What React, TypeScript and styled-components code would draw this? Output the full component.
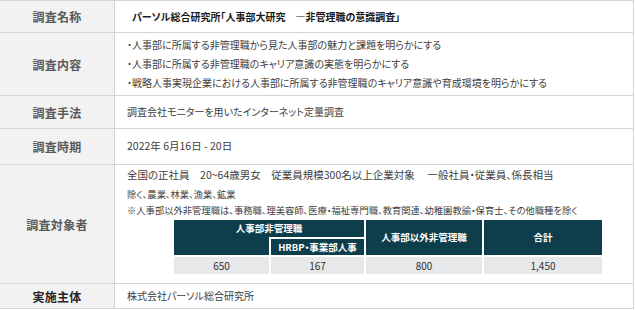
import React from "react";
import styled, { createGlobalStyle } from "styled-components";

const Global = createGlobalStyle`
  html, body { margin: 0; padding: 0; background: #ffffff; }
  body {
    font-family: "Noto Sans CJK JP", "Noto Sans", sans-serif;
    font-feature-settings: "palt";
    color: #404040;
  }
`;

const Sheet = styled.div`
  width: 634px;
  border-top: 1px solid #d4d4d4;
  border-right: 1px solid #d4d4d4;
  box-sizing: border-box;
`;

const Row = styled.div<{ $h: number }>`
  display: grid;
  grid-template-columns: 115px 1fr;
  height: ${(p) => p.$h}px;
  border-bottom: 1px solid #d4d4d4;
  box-sizing: border-box;
`;

const Label = styled.div<{ $dark?: boolean }>`
  background: #f2f2f2;
  border-right: 1px solid #d4d4d4;
  display: flex;
  align-items: center;
  justify-content: center;
  font-size: 12px;
  font-weight: 700;
  letter-spacing: 0.3px;
  color: ${(p) => (p.$dark ? "#262626" : "#595959")};
`;

const Cell = styled.div`
  display: flex;
  flex-direction: column;
  justify-content: center;
  padding-left: 12px;
  font-size: 10px;
  line-height: 1;
`;

const Title = styled.div`
  font-weight: 700;
  font-size: 10px;
  color: #1a1a1a;
  padding-left: 5px;
`;

const BulletList = styled.ul`
  list-style: none;
  margin: 0;
  padding: 0;
  display: flex;
  flex-direction: column;
  gap: 9px;
  font-size: 10px;
`;

const Bullet = styled.li`
  &::before { content: "・"; }
`;

const Plain = styled.div<{ $size?: number }>`
  font-size: ${(p) => p.$size ?? 10.5}px;
`;

const TargetCell = styled.div`
  display: flex;
  flex-direction: column;
  padding: 4px 0 0 12px;
`;

const Line = styled.div<{ $size: number; $mt: number }>`
  font-size: ${(p) => p.$size}px;
  margin-top: ${(p) => p.$mt}px;
  line-height: 1.2;
  white-space: nowrap;
`;

const Counts = styled.div`
  margin: 4px 0 0 47px;
  width: 428px;
  display: grid;
  grid-template-columns: 95px 95px 118px 120px;
  grid-template-rows: 17px 18px 19px;
`;

const Head = styled.div<{ $col: string; $row: string; $top?: boolean; $left?: boolean }>`
  grid-column: ${(p) => p.$col};
  grid-row: ${(p) => p.$row};
  background: #0e3e4b;
  color: #ffffff;
  font-weight: 700;
  font-size: 9.5px;
  display: flex;
  align-items: center;
  justify-content: center;
  box-sizing: border-box;
  border-left: ${(p) => (p.$left ? "2px solid #ffffff" : "none")};
  border-top: ${(p) => (p.$top ? "2px solid #ffffff" : "none")};
`;

const Num = styled.div<{ $left?: boolean }>`
  grid-row: 3;
  background: #e7e8ea;
  color: #333333;
  font-size: 10px;
  display: flex;
  align-items: center;
  justify-content: center;
  box-sizing: border-box;
  border-top: 2px solid #ffffff;
  border-left: ${(p) => (p.$left ? "2px solid #ffffff" : "none")};
`;

export default function App() {
  return (
    <>
      <Global />
      <Sheet>
        <Row $h={32}>
          <Label>調査名称</Label>
          <Cell>
            <Title>パーソル総合研究所「人事部大研究　―非管理職の意識調査」</Title>
          </Cell>
        </Row>
        <Row $h={63}>
          <Label>調査内容</Label>
          <Cell>
            <BulletList>
              <Bullet>人事部に所属する非管理職から見た人事部の魅力と課題を明らかにする</Bullet>
              <Bullet>人事部に所属する非管理職のキャリア意識の実態を明らかにする</Bullet>
              <Bullet>戦略人事実現企業における人事部に所属する非管理職のキャリア意識や育成環境を明らかにする</Bullet>
            </BulletList>
          </Cell>
        </Row>
        <Row $h={33}>
          <Label>調査手法</Label>
          <Cell>
            <Plain $size={10}>調査会社モニターを用いたインターネット定量調査</Plain>
          </Cell>
        </Row>
        <Row $h={36}>
          <Label>調査時期</Label>
          <Cell>
            <Plain>2022年 6月16日 - 20日</Plain>
          </Cell>
        </Row>
        <Row $h={119}>
          <Label>調査対象者</Label>
          <TargetCell>
            <Line $size={10.5} $mt={0}>全国の正社員　20~64歳男女　従業員規模300名以上企業対象　 一般社員・従業員、係長相当</Line>
            <Line $size={9.3} $mt={7}>除く、農業、林業、漁業、鉱業</Line>
            <Line $size={9.3} $mt={5}>※人事部以外非管理職は、事務職、理美容師、医療・福祉専門職、教育関連、幼稚園教諭・保育士、その他職種を除く</Line>
            <Counts>
              <Head $col="1 / 3" $row="1">人事部非管理職</Head>
              <Head $col="1" $row="2" />
              <Head $col="2" $row="2" $top $left>HRBP・事業部人事</Head>
              <Head $col="3" $row="1 / 3" $left>人事部以外非管理職</Head>
              <Head $col="4" $row="1 / 3" $left>合計</Head>
              <Num>650</Num>
              <Num $left>167</Num>
              <Num $left>800</Num>
              <Num $left>1,450</Num>
            </Counts>
          </TargetCell>
        </Row>
        <Row $h={25}>
          <Label $dark>実施主体</Label>
          <Cell>
            <Plain $size={10}>株式会社パーソル総合研究所</Plain>
          </Cell>
        </Row>
      </Sheet>
    </>
  );
}
